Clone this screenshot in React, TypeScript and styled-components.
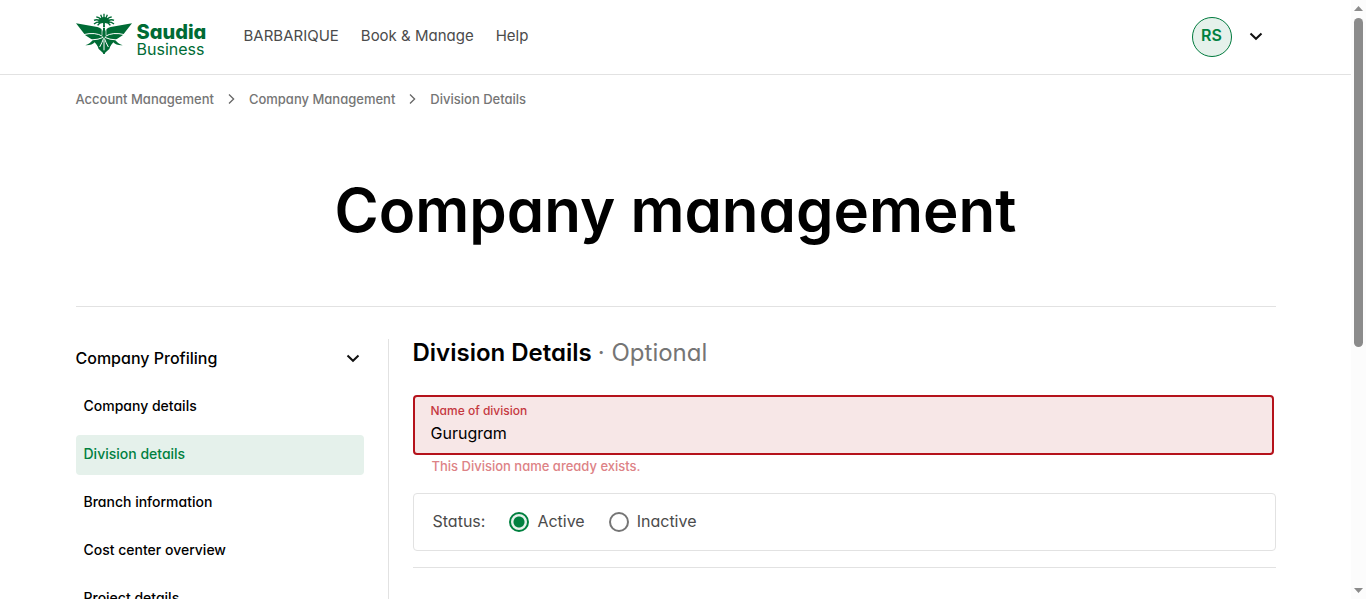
import React, { useState } from "react";
import styled, { createGlobalStyle } from "styled-components";

const green = "#007a3d";
const line = "#e2e2e2";

const GlobalStyle = createGlobalStyle`
  *, *::before, *::after { box-sizing: border-box; }
  body {
    margin: 0;
    background: #fff;
    color: #000;
    font-family: Inter, "Liberation Sans", sans-serif;
    font-feature-settings: "cv11";
  }
  button, input { font: inherit; font-feature-settings: inherit; color: inherit; }
  a { color: inherit; text-decoration: none; }
  h1, h2, p, ul, ol { margin: 0; padding: 0; }
  ul, ol { list-style: none; }
`;

const Window = styled.div`
  display: flex;
  height: 100vh;
`;

const Page = styled.div`
  flex: 1;
  min-width: 0;
  overflow-y: auto;
  scrollbar-width: none;
`;

const ScrollTrack = styled.div`
  display: flex;
  flex-direction: column;
  align-items: center;
  width: 15px;
  padding: 6px 0;
  background: #fcfcfc;
`;

const ScrollThumb = styled.div`
  width: 9px;
  height: 56%;
  margin: 7px 0 auto;
  border-radius: 5px;
  background: #8b8b8b;
`;

const Header = styled.header`
  border-bottom: 1px solid ${line};
`;

const Container = styled.div`
  max-width: 1200px;
  margin: 0 auto;
`;

const HeaderBar = styled(Container)`
  display: flex;
  align-items: center;
  height: 74px;
`;

const Logo = styled.a`
  display: flex;
  align-items: flex-start;
  gap: 5px;
  width: 168px;
  height: 48px;
  color: #006b35;
`;

const LogoText = styled.span`
  display: flex;
  flex-direction: column;
  padding-top: 9px;
`;

const LogoName = styled.span`
  font-size: 20px;
  line-height: 20px;
  font-weight: 800;
`;

const LogoUnit = styled.span`
  font-size: 16px;
  line-height: 14px;
`;

const Nav = styled.nav`
  display: flex;
  gap: 22px;
  padding-bottom: 2px;
  font-size: 15px;
  line-height: 20px;
  color: #4b4b4b;
`;

const Account = styled.div`
  display: flex;
  align-items: center;
  gap: 16px;
  margin: 0 12px 0 auto;
`;

const Avatar = styled.span`
  display: grid;
  place-items: center;
  width: 40px;
  height: 40px;
  padding-bottom: 4px;
  border: 1px solid ${green};
  border-radius: 50%;
  background: #e5f1eb;
  color: #00803f;
  font-size: 16px;
  font-weight: 600;
`;

const IconButton = styled.button`
  display: grid;
  place-items: center;
  width: 16px;
  height: 16px;
  padding: 0 0 2px;
  border: 0;
  background: none;
`;

const Breadcrumb = styled.ol`
  display: flex;
  align-items: center;
  gap: 14px;
  padding-top: 15px;
  font-size: 13px;
  line-height: 18px;
  font-weight: 500;
  color: #757575;

  li { display: flex; align-items: center; gap: 14px; }
`;

const Title = styled.h1`
  padding: 58px 0 52px;
  font-size: 60px;
  line-height: 88px;
  font-weight: 600;
  text-align: center;
`;

const Columns = styled.div`
  display: flex;
  padding-top: 32px;
  border-top: 1px solid ${line};
`;

const Sidebar = styled.aside`
  width: 313px;
  flex-shrink: 0;
  padding-right: 24px;
  border-right: 1px solid ${line};
`;

const GroupButton = styled.button`
  display: flex;
  align-items: center;
  justify-content: space-between;
  width: 100%;
  height: 40px;
  padding: 0 4px 2px 0;
  border: 0;
  background: none;
  font-size: 16px;
  font-weight: 500;
`;

const SideList = styled.ul`
  display: flex;
  flex-direction: column;
  gap: 8px;
  padding: 8px 0 24px;
`;

const SideLink = styled.a<{ $active?: boolean }>`
  display: block;
  padding: 9px 8px 11px;
  border-radius: 4px;
  background: ${(p) => (p.$active ? "#e5f1eb" : "transparent")};
  color: ${(p) => (p.$active ? "#00803f" : "#000")};
  font-size: 14px;
  line-height: 20px;
  font-weight: 500;
`;

const Details = styled.main`
  flex: 1;
  min-width: 0;
  padding-left: 24px;
`;

const SectionTitle = styled.h2`
  font-size: 24px;
  line-height: 28px;
  font-weight: 600;

  span { font-weight: 400; color: #757575; }
`;

const Field = styled.div`
  display: flex;
  flex-direction: column;
  height: 60px;
  margin: 28px 2px 0 0;
  padding: 6px 16px;
  border: 2px solid #b5121b;
  border-radius: 4px;
  background: #f7e7e7;

  label {
    font-size: 12px;
    line-height: 16px;
    font-weight: 500;
    color: #c5383f;
  }

  input {
    width: 100%;
    height: 28px;
    padding: 0;
    border: 0;
    outline: 0;
    background: none;
    font-size: 16px;
  }
`;

const FieldError = styled.p`
  padding: 2px 19px 0;
  font-size: 13px;
  line-height: 18px;
  font-weight: 500;
  color: #dd8286;
`;

const StatusBox = styled.div`
  display: flex;
  align-items: center;
  gap: 24px;
  height: 58px;
  margin-top: 18px;
  padding: 0 19px;
  border: 1px solid ${line};
  border-radius: 4px;
  font-size: 16px;
  line-height: 20px;
  color: #4b4b4b;
`;

const StatusText = styled.span`
  padding-bottom: 2px;
`;

const Choice = styled.label`
  display: flex;
  align-items: center;
  gap: 8px;
`;

const Radio = styled.input`
  appearance: none;
  width: 20px;
  height: 20px;
  margin: 0;
  border: 2px solid #757575;
  border-radius: 50%;
  background: #fff;

  &:checked {
    border-color: #00803f;
    background: radial-gradient(circle, #00803f 5px, #e5f1eb 6px);
  }
`;

const Divider = styled.hr`
  margin: 16px 0 64px;
  border: 0;
  border-top: 1px solid ${line};
`;

const Chevron = () => (
  <svg width="14" height="9" viewBox="0 0 14 9" fill="none" stroke="#111" strokeWidth="2" aria-hidden="true">
    <path d="M1.5 1.5 7 6.8l5.5-5.3" />
  </svg>
);

const Separator = () => (
  <svg width="7" height="10" viewBox="0 0 7 10" fill="none" stroke="#666" strokeWidth="1.3" aria-hidden="true">
    <path d="m1 .5 4.600 4.500L1 9.500" />
  </svg>
);

const PalmEmblem = () => (
  <svg width="56" height="42" viewBox="6 10 168 126" fill="currentColor" aria-hidden="true">
    <path d="M6 41 70 52Q84 55 87 66V132H90L62 98Q54 108 34 107Q50 101 56 91L34 77Z" />
    <path d="M174 41 110 52Q96 55 93 66V132H90L118 98Q126 108 146 107Q130 101 124 91L146 77Z" />
    <path d="M87 54h6v78h-6Z" />
    <path d="M66 96 90 84 114 96 106 118 90 132 74 118Z" />
    <g fill="none" stroke="#fff" strokeWidth="3">
      <path d="M28 75Q64 66 86 80M152 75Q116 66 94 80" />
      <path d="M50 91Q75 90 88 83M130 91Q105 90 92 83" />
      <path d="M77 112Q84 99 89 86M103 112Q96 99 91 86" />
      <path d="M90 92V122" />
      <path d="M84 56V76M96 56V76" strokeWidth="2" />
    </g>
    <path d="M72 40Q74 24 90 22Q106 24 108 40Q98 36 90 42Q82 36 72 40Z" />
    <g fill="none" stroke="currentColor" strokeWidth="4">
      <path d="M90 40Q84 24 80 15M90 40V12M90 40Q96 24 100 15M90 40Q78 22 67 22M90 40Q102 22 113 22M90 40Q72 26 60 32M90 40Q108 26 120 32M88 38Q70 34 60 43M92 38Q110 34 120 43M86 38Q76 38 71 47M94 38Q104 38 109 47" />
    </g>
    <path d="M88 36h4l1 16h-6Z" />
  </svg>
);

const sections = [
  "Company details",
  "Division details",
  "Branch information",
  "Cost center overview",
  "Project details",
];

export default function App() {
  const [name, setName] = useState("Gurugram");
  const [status, setStatus] = useState("Active");

  return (
    <Window>
      <GlobalStyle />
      <Page>
        <Header>
          <HeaderBar>
            <Logo href="#" aria-label="Saudia Business">
              <PalmEmblem />
              <LogoText>
                <LogoName>Saudia</LogoName>
                <LogoUnit>Business</LogoUnit>
              </LogoText>
            </Logo>
            <Nav>
              <a href="#">BARBARIQUE</a>
              <a href="#">Book &amp; Manage</a>
              <a href="#">Help</a>
            </Nav>
            <Account>
              <Avatar>RS</Avatar>
              <IconButton aria-label="Open account menu">
                <Chevron />
              </IconButton>
            </Account>
          </HeaderBar>
        </Header>
        <Container>
          <nav aria-label="Breadcrumb">
            <Breadcrumb>
              <li><a href="#">Account Management</a><Separator /></li>
              <li><a href="#">Company Management</a><Separator /></li>
              <li>Division Details</li>
            </Breadcrumb>
          </nav>
          <Title>Company management</Title>
          <Columns>
            <Sidebar>
              <GroupButton aria-expanded="true">
                Company Profiling
                <Chevron />
              </GroupButton>
              <SideList>
                {sections.map((s) => (
                  <li key={s}>
                    <SideLink href="#" $active={s === "Division details"}>{s}</SideLink>
                  </li>
                ))}
              </SideList>
            </Sidebar>
            <Details>
              <SectionTitle>Division Details <span>· Optional</span></SectionTitle>
              <Field>
                <label htmlFor="division">Name of division</label>
                <input
                  id="division"
                  value={name}
                  onChange={(e) => setName(e.target.value)}
                  aria-invalid="true"
                  aria-describedby="division-error"
                />
              </Field>
              <FieldError id="division-error">This Division name aready exists.</FieldError>
              <StatusBox role="radiogroup" aria-labelledby="status-label">
                <StatusText id="status-label">Status:</StatusText>
                {["Active", "Inactive"].map((s) => (
                  <Choice key={s}>
                    <Radio type="radio" name="status" checked={status === s} onChange={() => setStatus(s)} />
                    <StatusText>{s}</StatusText>
                  </Choice>
                ))}
              </StatusBox>
              <Divider />
            </Details>
          </Columns>
        </Container>
      </Page>
      <ScrollTrack aria-hidden="true">
        <svg width="9" height="5" viewBox="0 0 9 5" fill="#8b8b8b"><path d="M0 5 4.500 0 9 5Z" /></svg>
        <ScrollThumb />
        <svg width="9" height="5" viewBox="0 0 9 5" fill="#8b8b8b"><path d="M0 0h9L4.500 5Z" /></svg>
      </ScrollTrack>
    </Window>
  );
}
